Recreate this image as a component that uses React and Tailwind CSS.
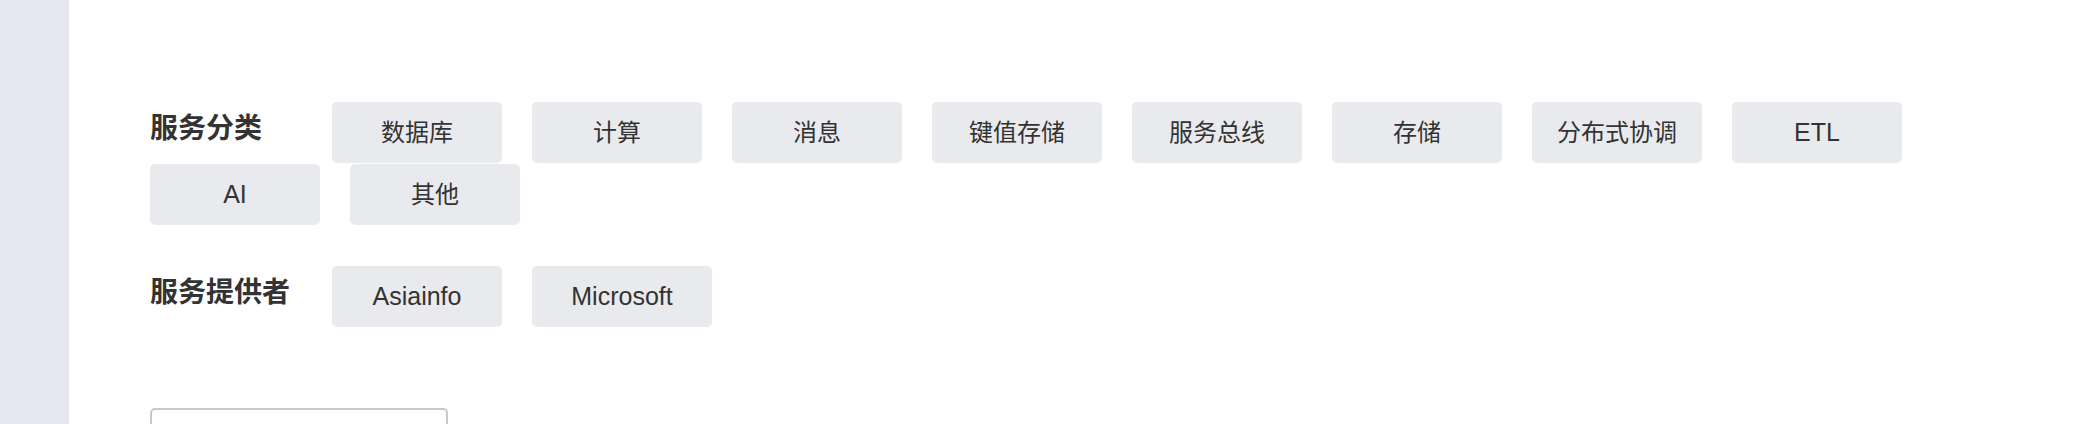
import React from 'react';

const categories = ['数据库', '计算', '消息', '键值存储', '服务总线', '存储', '分布式协调', 'ETL', 'AI', '其他'];
const providers = [
    { name: 'Asiainfo', width: 'w-[170px]' },
    { name: 'Microsoft', width: 'w-[180px]' },
];

// latin labels render a touch wider in the original
const isLatin = (s) => /^[A-Za-z]+$/.test(s);

function Tag({ children, className = 'w-[170px]' }) {
    const size = isLatin(children) ? 'text-[25px]' : 'text-[24px]';
    return (
        <button
            className={`h-[61px] ${className} ${size} mr-[30px] rounded-[5px] bg-[#e9eaee] text-[#333333] flex items-center justify-center`}
        >
            {children}
        </button>
    );
}

export default function App() {
    return (
        <div
            className="flex w-full h-[424px] overflow-hidden bg-white"
            style={{ fontFamily: '"Liberation Sans", "Noto Sans CJK SC", sans-serif' }}
        >
            {/* Sidebar */}
            <div className="w-[69px] shrink-0 bg-[#e5e8f1]" />

            {/* Content */}
            <div className="flex-1 pl-[81px] pr-[80px] pt-[102px]">
                {/* 服务分类 */}
                <div className="flex flex-wrap gap-y-[1px]">
                    <div className="w-[152px] mr-[30px] mt-[7px] h-[40px] leading-[40px] text-[28px] font-bold text-[#333333]">
                        服务分类
                    </div>
                    {categories.map((c) => (
                        <Tag key={c}>{c}</Tag>
                    ))}
                </div>

                {/* 服务提供者 */}
                <div className="flex flex-wrap mt-[41px]">
                    <div className="w-[152px] mr-[30px] mt-[7px] h-[40px] leading-[40px] text-[28px] font-bold text-[#333333] whitespace-nowrap">
                        服务提供者
                    </div>
                    {providers.map((p) => (
                        <Tag key={p.name} className={p.width}>
                            {p.name}
                        </Tag>
                    ))}
                </div>

                {/* search box */}
                <div className="mt-[81px] w-[298px] h-[48px] border-2 border-[#c8c8c8] rounded-[5px] bg-white" />
            </div>
        </div>
    );
}
